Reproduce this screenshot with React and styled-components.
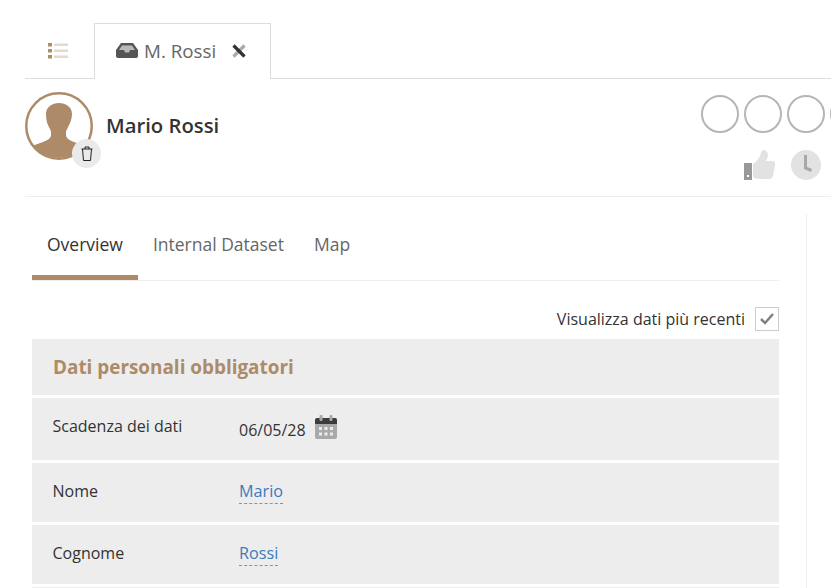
import styled, { createGlobalStyle } from "styled-components";

const GlobalStyle = createGlobalStyle`
  html, body {
    margin: 0;
    padding: 0;
    background: #fff;
    overflow: hidden;
  }
  body {
    font-family: "Open Sans", "Noto Sans", sans-serif;
    color: #333;
  }
`;

const fields = [
  { label: "Nome", value: "Mario" },
  { label: "Cognome", value: "Rossi" },
];

export default function App() {
  return (
    <>
      <GlobalStyle />
      <Page>
        <TabBar>
          <ListTab>
            <svg width="20" height="16" viewBox="0 0 20 16">
              <rect x="0" y="0" width="4" height="3.5" fill="#b08d68" />
              <rect x="0" y="6" width="4" height="3.5" fill="#b08d68" />
              <rect x="0" y="12" width="4" height="3.5" fill="#b08d68" />
              <rect x="6" y="0.5" width="14" height="2.5" fill="#e3d9cd" />
              <rect x="6" y="6.5" width="14" height="2.5" fill="#e3d9cd" />
              <rect x="6" y="12.5" width="14" height="2.5" fill="#e3d9cd" />
            </svg>
          </ListTab>
          <OpenTab>
            <svg width="22" height="15" viewBox="0 0 22 15">
              <path d="M5 0h12l5 7v6a2 2 0 0 1-2 2H2a2 2 0 0 1-2-2V7z" fill="#555" />
              <path d="M6 2.500h10l3 4.500h-5l-1 2.500H9L8 7H3z" fill="#b9b9b9" />
            </svg>
            <TabTitle>M. Rossi</TabTitle>
            <CloseIcon width="14" height="14" viewBox="0 0 14 14">
              <path d="M12.500 1.500L1.500 12.500" stroke="#aaa" strokeWidth="3.200" />
              <path d="M1.500 1.500L12.500 12.500" stroke="#333" strokeWidth="3.200" />
            </CloseIcon>
          </OpenTab>
        </TabBar>

        <Header>
          <Identity>
            <Avatar>
              <svg width="68" height="68" viewBox="0 0 68 68">
                <defs>
                  <clipPath id="avatarClip">
                    <circle cx="34" cy="34" r="32" />
                  </clipPath>
                </defs>
                <path
                  clipPath="url(#avatarClip)"
                  d="M21 22c0-7 6-11 13-11s13 4 13 11c0 5-2 9-3 11-1 3-3 5-3 7v3c0 3 3 5 8 7l14 5v14H4V55l14-5c5-2 8-4 8-7v-3c0-2-2-4-3-7-1-2-2-6-2-11z"
                  fill="#ad8b68"
                />
                <circle cx="34" cy="34" r="32.750" fill="none" stroke="#ad8b68" strokeWidth="2.500" />
              </svg>
              <TrashBadge>
                <svg width="12" height="15" viewBox="0 0 12 15" fill="none" stroke="#222" strokeWidth="1">
                  <path d="M0.500 3h11" />
                  <path d="M4 3V1h4v2" />
                  <path d="M1.500 3l1 11.500h7l1-11.500" />
                </svg>
              </TrashBadge>
            </Avatar>
            <PersonName>Mario Rossi</PersonName>
          </Identity>
          <Status>
            <Rings>
              <Ring />
              <Ring />
              <Ring />
              <Ring />
            </Rings>
            <StatusIcons>
              <svg width="31" height="30" viewBox="0 0 31 30">
                <rect x="0" y="13" width="8" height="17" fill="#999" />
                <rect x="3" y="25" width="2" height="2" fill="#fff" />
                <path
                  d="M9 14c3-2 5-4 7-8 1-3 1-5 3-6 3 0 5 2 5 5 0 2-1 4-2 6h7c2 0 3 2 2 4l-2 11c-1 2-2 3-4 3H15c-2 0-4-1-6-2z"
                  fill="#e2e2e2"
                />
              </svg>
              <ClockFace>
                <svg width="30" height="30" viewBox="0 0 30 30">
                  <circle cx="15" cy="15" r="15" fill="#e2e2e2" />
                  <path d="M14.500 5v13l6 2.500" fill="none" stroke="#a8a8a8" strokeWidth="3" />
                </svg>
              </ClockFace>
            </StatusIcons>
          </Status>
        </Header>

        <Body>
          <Main>
            <SubTabs>
              <SubTab $active>Overview</SubTab>
              <SubTab>Internal Dataset</SubTab>
              <SubTab>Map</SubTab>
            </SubTabs>

            <RecentRow>
              <RecentLabel>Visualizza dati più recenti</RecentLabel>
              <CheckBox>
                <svg width="14" height="12" viewBox="0 0 14 12" fill="none" stroke="#808080" strokeWidth="2.500">
                  <path d="M1 6l4 4 8-9" />
                </svg>
              </CheckBox>
            </RecentRow>

            <SectionTitle>Dati personali obbligatori</SectionTitle>

            <DateRow>
              <Label>Scadenza dei dati</Label>
              <DateValue>
                <DateText>06/05/28</DateText>
                <svg width="22" height="24" viewBox="0 0 22 24">
                  <path d="M2 3h18a2 2 0 0 1 2 2v4H0V5a2 2 0 0 1 2-2z" fill="#3c3c3c" />
                  <path d="M0 9h22v13a2 2 0 0 1-2 2H2a2 2 0 0 1-2-2z" fill="#a9a9a9" />
                  <rect x="4.500" y="0" width="3" height="6" rx="1" fill="#a9a9a9" />
                  <rect x="14.500" y="0" width="3" height="6" rx="1" fill="#a9a9a9" />
                  {[4, 9.5, 15].map((x) =>
                    [12, 17.5].map((y) => (
                      <rect key={`${x}-${y}`} x={x} y={y} width="3" height="3" fill="#ececec" />
                    ))
                  )}
                </svg>
              </DateValue>
            </DateRow>

            {fields.map((f) => (
              <FieldRow key={f.label}>
                <Label>{f.label}</Label>
                <EditableValue>{f.value}</EditableValue>
              </FieldRow>
            ))}
            <FieldRow />
          </Main>
          <SidePanel />
        </Body>
      </Page>
    </>
  );
}

const Page = styled.div`
  width: 831px;
  height: 588px;
  padding: 23px 0 0 25px;
  box-sizing: border-box;
  overflow: hidden;
`;

const TabBar = styled.div`
  display: flex;
  align-items: flex-end;
  height: 56px;
  box-sizing: border-box;
  border-bottom: 1px solid #ddd;
`;

const ListTab = styled.div`
  display: flex;
  align-items: center;
  justify-content: center;
  width: 69px;
  height: 55px;
  padding-right: 3px;
  box-sizing: border-box;
`;

const OpenTab = styled.div`
  display: flex;
  align-items: center;
  width: 177px;
  height: 56px;
  margin-bottom: -1px;
  padding: 0 0 2px 21px;
  box-sizing: border-box;
  background: #fff;
  border: 1px solid #ddd;
  border-bottom: none;
`;

const TabTitle = styled.span`
  margin-left: 6px;
  font-size: 18.8px;
  color: #666;
`;

const CloseIcon = styled.svg`
  margin-left: 16px;
`;

const Header = styled.div`
  display: flex;
  justify-content: space-between;
  height: 118px;
  box-sizing: border-box;
  border-bottom: 1px solid #eee;
`;

const Identity = styled.div`
  display: flex;
  align-items: flex-start;
  padding-top: 13px;
`;

const Avatar = styled.div`
  position: relative;
  width: 68px;
  height: 68px;
`;

const TrashBadge = styled.div`
  position: absolute;
  right: -8px;
  bottom: -8px;
  display: flex;
  align-items: center;
  justify-content: center;
  width: 29px;
  height: 29px;
  border-radius: 50%;
  background: #eaeaea;
`;

const PersonName = styled.div`
  margin: 19px 0 0 13px;
  font-size: 20.3px;
  font-weight: 600;
  line-height: 28px;
  color: #333;
`;

const Status = styled.div`
  display: flex;
  flex-direction: column;
  align-items: flex-end;
  width: 130px;
  overflow: hidden;
`;

const Rings = styled.div`
  display: flex;
  gap: 5px;
  width: 180px;
  align-self: flex-start;
  padding-top: 16px;
`;

const Ring = styled.div`
  flex: none;
  width: 38px;
  height: 38px;
  box-sizing: border-box;
  border: 2px solid #b5b5b5;
  border-radius: 50%;
`;

const StatusIcons = styled.div`
  display: flex;
  align-items: flex-start;
  gap: 16px;
  align-self: flex-start;
  margin: 17px 0 0 43px;
`;

const ClockFace = styled.div`
  display: flex;
`;

const Body = styled.div`
  display: flex;
  height: 400px;
`;

const Main = styled.div`
  width: 747px;
  margin-left: 7px;
`;

const SubTabs = styled.div`
  display: flex;
  height: 84px;
  box-sizing: border-box;
  border-bottom: 1px solid #eee;
`;

const SubTab = styled.div`
  height: 83px;
  box-sizing: border-box;
  padding: 35px 15px 0;
  font-size: 17.5px;
  line-height: 24px;
  color: ${({ $active }) => ($active ? "#333" : "#666")};
  border-bottom: ${({ $active }) => ($active ? "5px solid #ad8b68" : "none")};
`;

const RecentRow = styled.div`
  display: flex;
  align-items: center;
  justify-content: flex-end;
  gap: 10px;
  height: 58px;
  padding-top: 18px;
  box-sizing: border-box;
`;

const RecentLabel = styled.span`
  font-size: 16px;
  color: #333;
`;

const CheckBox = styled.div`
  display: flex;
  align-items: center;
  justify-content: center;
  width: 24px;
  height: 24px;
  box-sizing: border-box;
  border: 1px solid #ccc;
`;

const SectionTitle = styled.div`
  height: 56px;
  margin-bottom: 2.5px;
  padding-left: 21px;
  box-sizing: border-box;
  background: #ededed;
  font-size: 18.9px;
  font-weight: 700;
  line-height: 56px;
  color: #ad8b68;
`;

const FieldRow = styled.div`
  display: flex;
  align-items: center;
  height: 59.5px;
  margin-bottom: 2.5px;
  padding: 0 0 2px 20.5px;
  box-sizing: border-box;
  background: #ededed;
`;

const DateRow = styled(FieldRow)`
  align-items: flex-start;
  height: 62.5px;
  padding-top: 17.5px;
`;

const Label = styled.div`
  width: 186.5px;
  font-size: 16px;
  line-height: 22px;
  color: #333;
`;

const DateValue = styled.div`
  display: flex;
  align-items: flex-start;
  gap: 9px;
`;

const DateText = styled.span`
  margin-top: 4px;
  font-size: 16px;
  line-height: 22px;
  color: #333;
`;

const EditableValue = styled.span`
  font-size: 16.2px;
  line-height: 24px;
  color: #3a7cbc;
  border-bottom: 1px dashed #ad8b68;
`;

const SidePanel = styled.div`
  width: 0;
  height: 400px;
  margin: 17px 0 0 27px;
  border-left: 1px solid #eee;
`;
